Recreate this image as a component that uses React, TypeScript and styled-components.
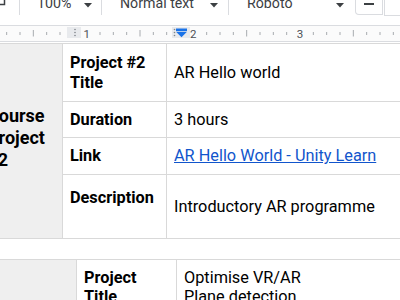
import React from "react";
import styled, { createGlobalStyle } from "styled-components";

const colors = {
  toolbarText: "#3c4043",
  divider: "#dadce0",
  rulerTick: "#a8abaf",
  rulerText: "#4d5156",
  rulerMark: "#e8eaed",
  blue: "#1a73e8",
  cellBorder: "#d9d9d9",
  cellFill: "#efefef",
  link: "#1155cc",
};

const GlobalStyle = createGlobalStyle`
  html, body {
    margin: 0;
    padding: 0;
    background: #fff;
  }
  body {
    font-family: Roboto, "Liberation Sans", sans-serif;
    overflow: hidden;
  }
`;

const INCH = 106.667;
const ORIGIN = -20;

const Caret = () => (
  <svg width="8" height="5" viewBox="0 0 8 5">
    <path d="M0 0 H8 L4 4.5 Z" fill={colors.toolbarText} />
  </svg>
);

const RulerDrawing = () => {
  const ticks = [];
  for (let k = 1; k < 34; k++) {
    if (k % 8 === 0) continue;
    const x = ORIGIN + (k * INCH) / 8;
    const long = k % 4 === 0;
    ticks.push(
      <line
        key={k}
        x1={x}
        x2={x}
        y1={long ? 4 : 6}
        y2={long ? 10.5 : 9}
        stroke={colors.rulerTick}
        strokeWidth={1}
      />
    );
  }
  return (
    <svg width="400" height="15" viewBox="0 0 400 15">
      {ticks}
      {[1, 2, 3].map((n) => (
        <text
          key={n}
          x={ORIGIN + n * INCH}
          y={11.5}
          fontSize="11.5"
          fill={colors.rulerText}
          textAnchor="middle"
          fontFamily="Roboto, sans-serif"
        >
          {n}
        </text>
      ))}
      <rect x="67" y="1" width="14" height="11" fill={colors.rulerMark} />
      {[3.5, 6.5, 9.5].map((y) => (
        <circle key={y} cx="75" cy={y} r="0.8" fill="#80868b" />
      ))}
      <rect x="172" y="1" width="18" height="11" fill={colors.rulerMark} />
      {[3.5, 6.5, 9.5].map((y) => (
        <circle key={y} cx="174.5" cy={y} r="0.8" fill="#80868b" />
      ))}
      <rect x="176" y="2.5" width="11" height="2.5" fill={colors.blue} />
      <path d="M176 5.8 H187 L181.5 11.2 Z" fill={colors.blue} />
    </svg>
  );
};

const App = () => {
  return (
    <Page>
      <GlobalStyle />
      <Toolbar>
        <IconStub>
          <svg width="6" height="6" viewBox="0 0 6 6">
            <path d="M0 4.5 H4.5 V0" stroke={colors.toolbarText} strokeWidth="1.5" fill="none" />
          </svg>
        </IconStub>
        <Divider />
        <Dropdown width={81} padLeft={17} padRight={9}>
          <DropLabel>100%</DropLabel>
          <Caret />
        </Dropdown>
        <Divider />
        <Dropdown width={126} padLeft={18} padRight={10}>
          <DropLabel>Normal text</DropLabel>
          <Caret />
        </Dropdown>
        <Divider />
        <Dropdown width={126} padLeft={18} padRight={11}>
          <DropLabel>Roboto</DropLabel>
          <Caret />
        </Dropdown>
        <StepButton>
          <svg width="10" height="2" viewBox="0 0 10 2">
            <rect width="10" height="2" fill={colors.toolbarText} />
          </svg>
        </StepButton>
        <SizeBox />
      </Toolbar>
      <Ruler>
        <RulerDrawing />
      </Ruler>
      <Document>
        <InfoTable columns="82px 103px 1fr" rows="57px 35px 36px 63px">
          <GroupCell>
            Course
            <br />
            Project
            <br />
            #2
          </GroupCell>
          <LabelCell>
            Project #2
            <br />
            Title
          </LabelCell>
          <ValueCell>AR Hello world</ValueCell>
          <LabelCell>Duration</LabelCell>
          <ValueCell>3 hours</ValueCell>
          <LabelCell>Link</LabelCell>
          <ValueCell>
            <Link href="#">AR Hello World - Unity Learn</Link>
          </ValueCell>
          <LabelCell top={13}>Description</LabelCell>
          <ValueCell>Introductory AR programme</ValueCell>
        </InfoTable>
        <Spacer />
        <InfoTable columns="96px 99px 1fr" rows="70px">
          <GroupCell />
          <LabelCell top={8}>
            Project
            <br />
            Title
          </LabelCell>
          <ValueCell top={8}>
            Optimise VR/AR
            <br />
            Plane detection
          </ValueCell>
        </InfoTable>
      </Document>
    </Page>
  );
};

const Page = styled.div`
  width: 400px;
  height: 300px;
  overflow: hidden;
  background: #fff;
`;

const Toolbar = styled.div`
  height: 25px;
  display: flex;
  align-items: flex-start;
  border-bottom: 1px solid ${colors.divider};
  overflow: hidden;
  color: ${colors.toolbarText};
`;

const IconStub = styled.div`
  width: 19px;
  flex: none;
  display: flex;
`;

const Divider = styled.div`
  width: 1px;
  height: 15px;
  flex: none;
  background: ${colors.divider};
`;

const Dropdown = styled.div<{ width: number; padLeft: number; padRight: number }>`
  width: ${(props) => props.width}px;
  flex: none;
  box-sizing: border-box;
  padding: 0 ${(props) => props.padRight}px 0 ${(props) => props.padLeft}px;
  display: flex;
  justify-content: space-between;
  align-items: flex-start;

  svg {
    margin-top: 3px;
  }
`;

const DropLabel = styled.span`
  font-size: 14.2px;
  line-height: 20px;
  margin-top: -7px;
  white-space: nowrap;
`;

const StepButton = styled.div`
  width: 28px;
  height: 16px;
  flex: none;
  box-sizing: border-box;
  margin-top: -1px;
  border: 1px solid ${colors.divider};
  border-top: none;
  border-radius: 0 0 0 4px;
  display: flex;
  justify-content: center;
  align-items: center;
  padding-bottom: 5px;
`;

const SizeBox = styled.div`
  width: 40px;
  height: 16px;
  flex: none;
  margin-top: -1px;
  margin-left: 1px;
  border-left: 1px solid ${colors.divider};
  border-bottom: 1px solid ${colors.divider};
`;

const Ruler = styled.div`
  height: 15px;
  background: #fbfbfb;
  border-bottom: 1px solid ${colors.divider};
  display: flex;
`;

const Document = styled.div`
  padding-top: 1px;
  overflow: hidden;
`;

const InfoTable = styled.div<{ columns: string; rows: string }>`
  display: grid;
  grid-template-columns: ${(props) => props.columns};
  grid-template-rows: ${(props) => props.rows};
  gap: 1px;
  padding: 1px;
  width: 640px;
  margin-left: -21px;
  background: ${colors.cellBorder};
  color: #000;
  font-size: 16.3px;
  line-height: 19.4px;
`;

const Spacer = styled.div`
  height: 20px;
`;

const GroupCell = styled.div`
  grid-row: 1 / -1;
  background: ${colors.cellFill};
  display: flex;
  align-items: center;
  padding: 0 7px 6px;
  font-size: 18px;
  line-height: 22px;
  font-weight: 700;
  white-space: nowrap;
`;

const Cell = styled.div<{ top?: number }>`
  background: #fff;
  display: flex;
  align-items: ${(props) => (props.top !== undefined ? "flex-start" : "center")};
  padding: ${(props) => props.top ?? 0}px 7px 0;
  white-space: nowrap;
`;

const LabelCell = styled(Cell)`
  font-weight: 700;
`;

const ValueCell = styled(Cell)`
  font-weight: 400;
`;

const Link = styled.a`
  color: ${colors.link};
  text-decoration: underline;
`;

export default App;
